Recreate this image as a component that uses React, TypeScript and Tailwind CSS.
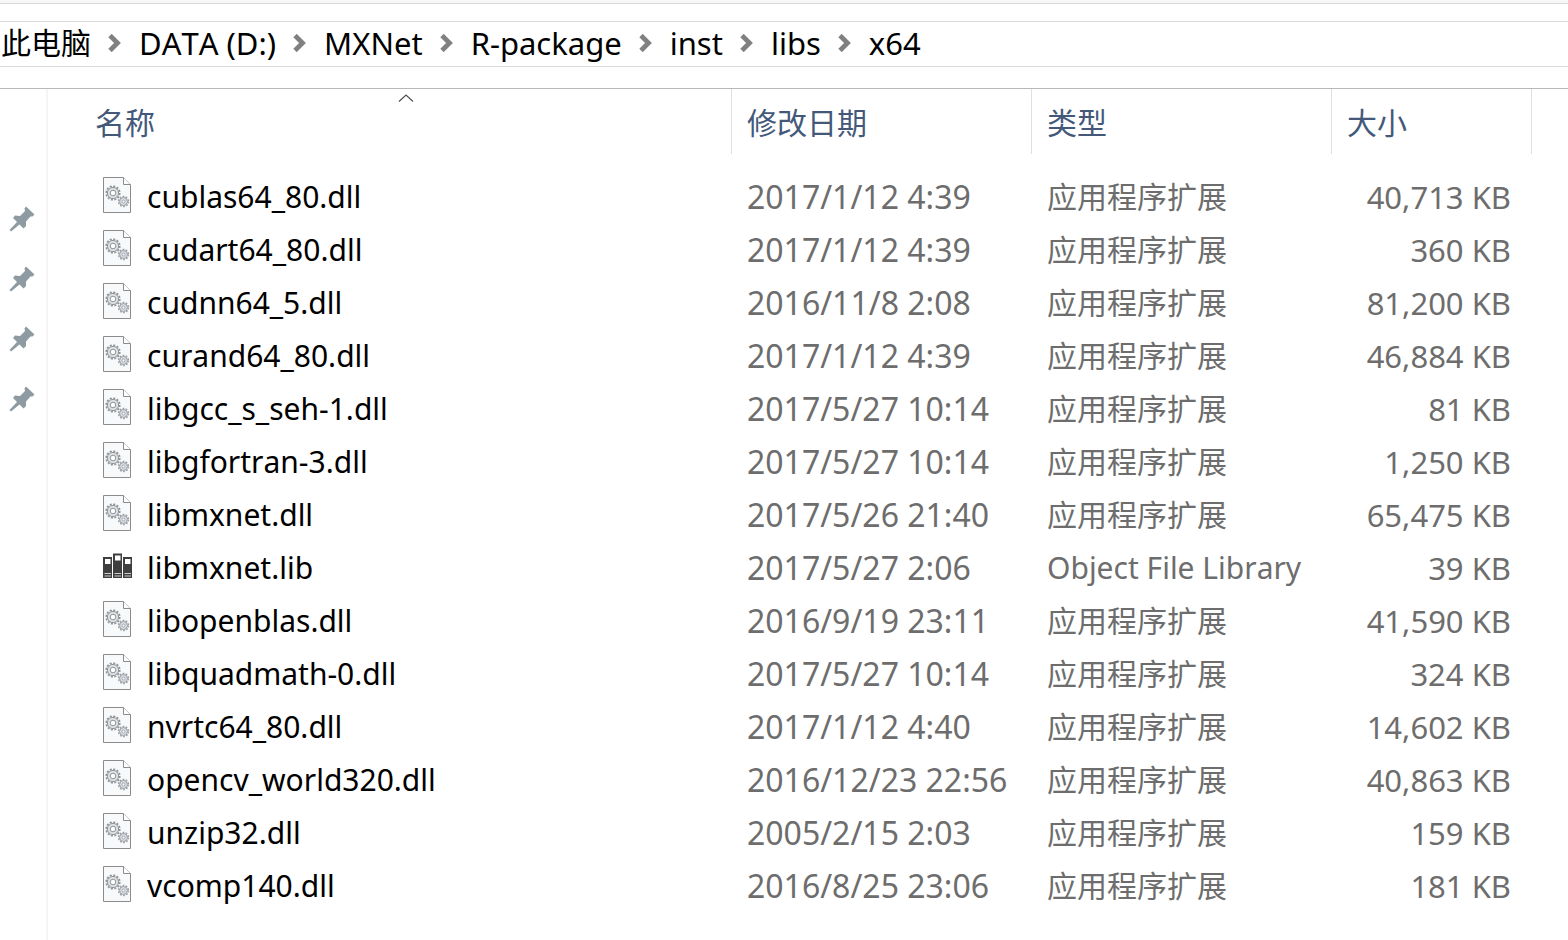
import { Fragment } from 'react';

const path = ['DATA (D:)', 'MXNet', 'R-package', 'inst', 'libs', 'x64'];

const DLL = '应用程序扩展';

const files = [
  { name: 'cublas64_80.dll', date: '2017/1/12 4:39', type: DLL, size: '40,713 KB' },
  { name: 'cudart64_80.dll', date: '2017/1/12 4:39', type: DLL, size: '360 KB' },
  { name: 'cudnn64_5.dll', date: '2016/11/8 2:08', type: DLL, size: '81,200 KB' },
  { name: 'curand64_80.dll', date: '2017/1/12 4:39', type: DLL, size: '46,884 KB' },
  { name: 'libgcc_s_seh-1.dll', date: '2017/5/27 10:14', type: DLL, size: '81 KB' },
  { name: 'libgfortran-3.dll', date: '2017/5/27 10:14', type: DLL, size: '1,250 KB' },
  { name: 'libmxnet.dll', date: '2017/5/26 21:40', type: DLL, size: '65,475 KB' },
  { name: 'libmxnet.lib', date: '2017/5/27 2:06', type: 'Object File Library', size: '39 KB' },
  { name: 'libopenblas.dll', date: '2016/9/19 23:11', type: DLL, size: '41,590 KB' },
  { name: 'libquadmath-0.dll', date: '2017/5/27 10:14', type: DLL, size: '324 KB' },
  { name: 'nvrtc64_80.dll', date: '2017/1/12 4:40', type: DLL, size: '14,602 KB' },
  { name: 'opencv_world320.dll', date: '2016/12/23 22:56', type: DLL, size: '40,863 KB' },
  { name: 'unzip32.dll', date: '2005/2/15 2:03', type: DLL, size: '159 KB' },
  { name: 'vcomp140.dll', date: '2016/8/25 23:06', type: DLL, size: '181 KB' },
];

function Chevron() {
  return (
    <svg className="w-[13px] h-[18px] shrink-0" viewBox="0 0 13 18" fill="none" aria-hidden="true">
      <path d="M2 1.5 L9.5 9 L2 16.5" stroke="#808080" strokeWidth="4.8" />
    </svg>
  );
}

function PinIcon() {
  return (
    <svg className="w-[26px] h-[26px]" viewBox="0 0 26 26" aria-hidden="true">
      <path d="M17 0.5 L25.5 8.5 L23.5 10.5 L21.5 10.5 L17 15.5 L17 20 L14.5 22.5 L10.5 18.5 L2 25.5 L0.5 24 L8 16 L4 12 L6 9.5 L11 10 L16 5 L15.5 2.5 Z" fill="#8e9ba3" />
    </svg>
  );
}

// gears are dashed rings, the dashes are the teeth
function DllIcon() {
  return (
    <svg className="w-[28px] h-[36px] shrink-0" viewBox="0 0 28 36" fill="none" aria-hidden="true">
      <path d="M0.5 0.5 H20.5 L27.5 7.5 V35.5 H0.5 Z" fill="#f8f9fa" stroke="#8c8c8c" />
      <path d="M20.5 0.5 V7.5 H27.5" fill="#fff" stroke="#8c8c8c" />
      <circle cx="10" cy="16" r="6.8" stroke="#8f9498" strokeWidth="1.6" strokeDasharray="2.1 1.46" />
      <circle cx="10" cy="16" r="5.6" fill="#dfe2e4" stroke="#8f9498" strokeWidth="1" />
      <circle cx="10" cy="16" r="2.8" fill="#fff" stroke="#8f9498" strokeWidth="1" />
      <circle cx="20.5" cy="24.5" r="5" stroke="#989ea3" strokeWidth="1.4" strokeDasharray="1.8 1.34" />
      <circle cx="20.5" cy="24.5" r="4" fill="#d6dce1" stroke="#989ea3" strokeWidth="1" />
      <circle cx="20.5" cy="24.5" r="1.5" fill="#f4f6f7" stroke="#989ea3" strokeWidth="0.8" />
    </svg>
  );
}

function LibIcon() {
  return (
    <svg className="w-[29px] h-[26px] shrink-0" viewBox="0 0 29 26" aria-hidden="true">
      <path d="M0 4 H9 V25 H0 Z M10 0.5 H19 V25 H10 Z M20 4 H29 V25 H20 Z" fill="#3f3f3f" />
      <path d="M2 6 H7.5 V11 H2 Z M12 2.5 H17.5 V7.5 H12 Z M22 6 H27.5 V11 H22 Z" fill="#fff" />
      <path d="M1.5 20 H8 V21 H1.5 Z M11.5 20 H18 V21 H11.5 Z M21.5 20 H28 V21 H21.5 Z M1.5 22.5 H8 V23.5 H1.5 Z M11.5 22.5 H18 V23.5 H11.5 Z M21.5 22.5 H28 V23.5 H21.5 Z" fill="#d0d0d0" />
    </svg>
  );
}

function ColumnHeader({ label, sorted }: { label: string; sorted?: boolean }) {
  return (
    <th
      scope="col"
      aria-sort={sorted ? 'ascending' : undefined}
      className="h-[81px] p-0 align-top font-normal text-left"
    >
      <button
        className={`relative flex items-center w-full h-[65px] pl-[15px] pt-0.5 text-[#44597a] ${sorted ? '' : 'border-l border-[#e0e0e0]'}`}
      >
        {sorted && (
          <svg className="absolute top-[5px] left-1/2 -ml-2 w-4 h-2" viewBox="0 0 16 8" fill="none" aria-hidden="true">
            <path d="M1 7.5 L8 1 L15 7.5" stroke="#505050" strokeWidth="1.2" />
          </svg>
        )}
        {label}
      </button>
    </th>
  );
}

export default function App() {
  return (
    <div className="min-h-screen flex flex-col bg-white text-[30px] leading-[44px] font-['Noto_Sans','Noto_Sans_CJK_SC',sans-serif] [font-kerning:none]">
      <div className="h-1 bg-[#f7f7f7] border-b border-[#d9d9d9]" />

      <nav aria-label="Path" className="mt-[17px] h-[46px] border-y border-[#d9d9d9] overflow-hidden">
        <ol className="flex items-center h-full pl-px pb-0.5 text-black whitespace-nowrap">
          <li><a href="#">此电脑</a></li>
          {path.map((part) => (
            <Fragment key={part}>
              <li className="pl-[17px] pr-[18px]"><Chevron /></li>
              <li className="text-[31px]"><a href="#">{part}</a></li>
            </Fragment>
          ))}
        </ol>
      </nav>

      <div className="mt-[21px] flex flex-1 border-t border-[#b8b8b8]">
        <aside className="w-12 shrink-0 pt-[100px] pl-[9px] border-r-2 border-[#f5f5f5]">
          <ul>
            {[0, 1, 2, 3].map((n) => (
              <li key={n} className="h-[60px] flex items-center"><PinIcon /></li>
            ))}
          </ul>
        </aside>

        <main className="flex-1 pl-8">
          <table className="w-full table-fixed border-collapse whitespace-nowrap">
            <colgroup>
              <col className="w-[651px]" />
              <col className="w-[300px]" />
              <col className="w-[300px]" />
              <col className="w-[200px]" />
              <col />
            </colgroup>
            <thead>
              <tr>
                <ColumnHeader label="名称" sorted />
                <ColumnHeader label="修改日期" />
                <ColumnHeader label="类型" />
                <ColumnHeader label="大小" />
                <td className="p-0 align-top"><div className="h-[65px] border-l border-[#e0e0e0]" /></td>
              </tr>
            </thead>
            <tbody className="text-[#6d6d6d]">
              {files.map((file) => (
                <tr key={file.name} className="h-[53px]">
                  <td className="p-0 pl-[23px] text-black">
                    <div className="flex items-center">
                      <span className="w-11 shrink-0 pb-1">
                        {file.name.endsWith('.lib') ? <LibIcon /> : <DllIcon />}
                      </span>
                      {file.name}
                    </div>
                  </td>
                  <td className="p-0 pl-4 text-[32px]">{file.date}</td>
                  <td className="p-0 pl-4">{file.type}</td>
                  <td className="p-0 pr-5 text-right text-[31px]">{file.size}</td>
                  <td className="p-0" />
                </tr>
              ))}
            </tbody>
          </table>
        </main>
      </div>
    </div>
  );
}
